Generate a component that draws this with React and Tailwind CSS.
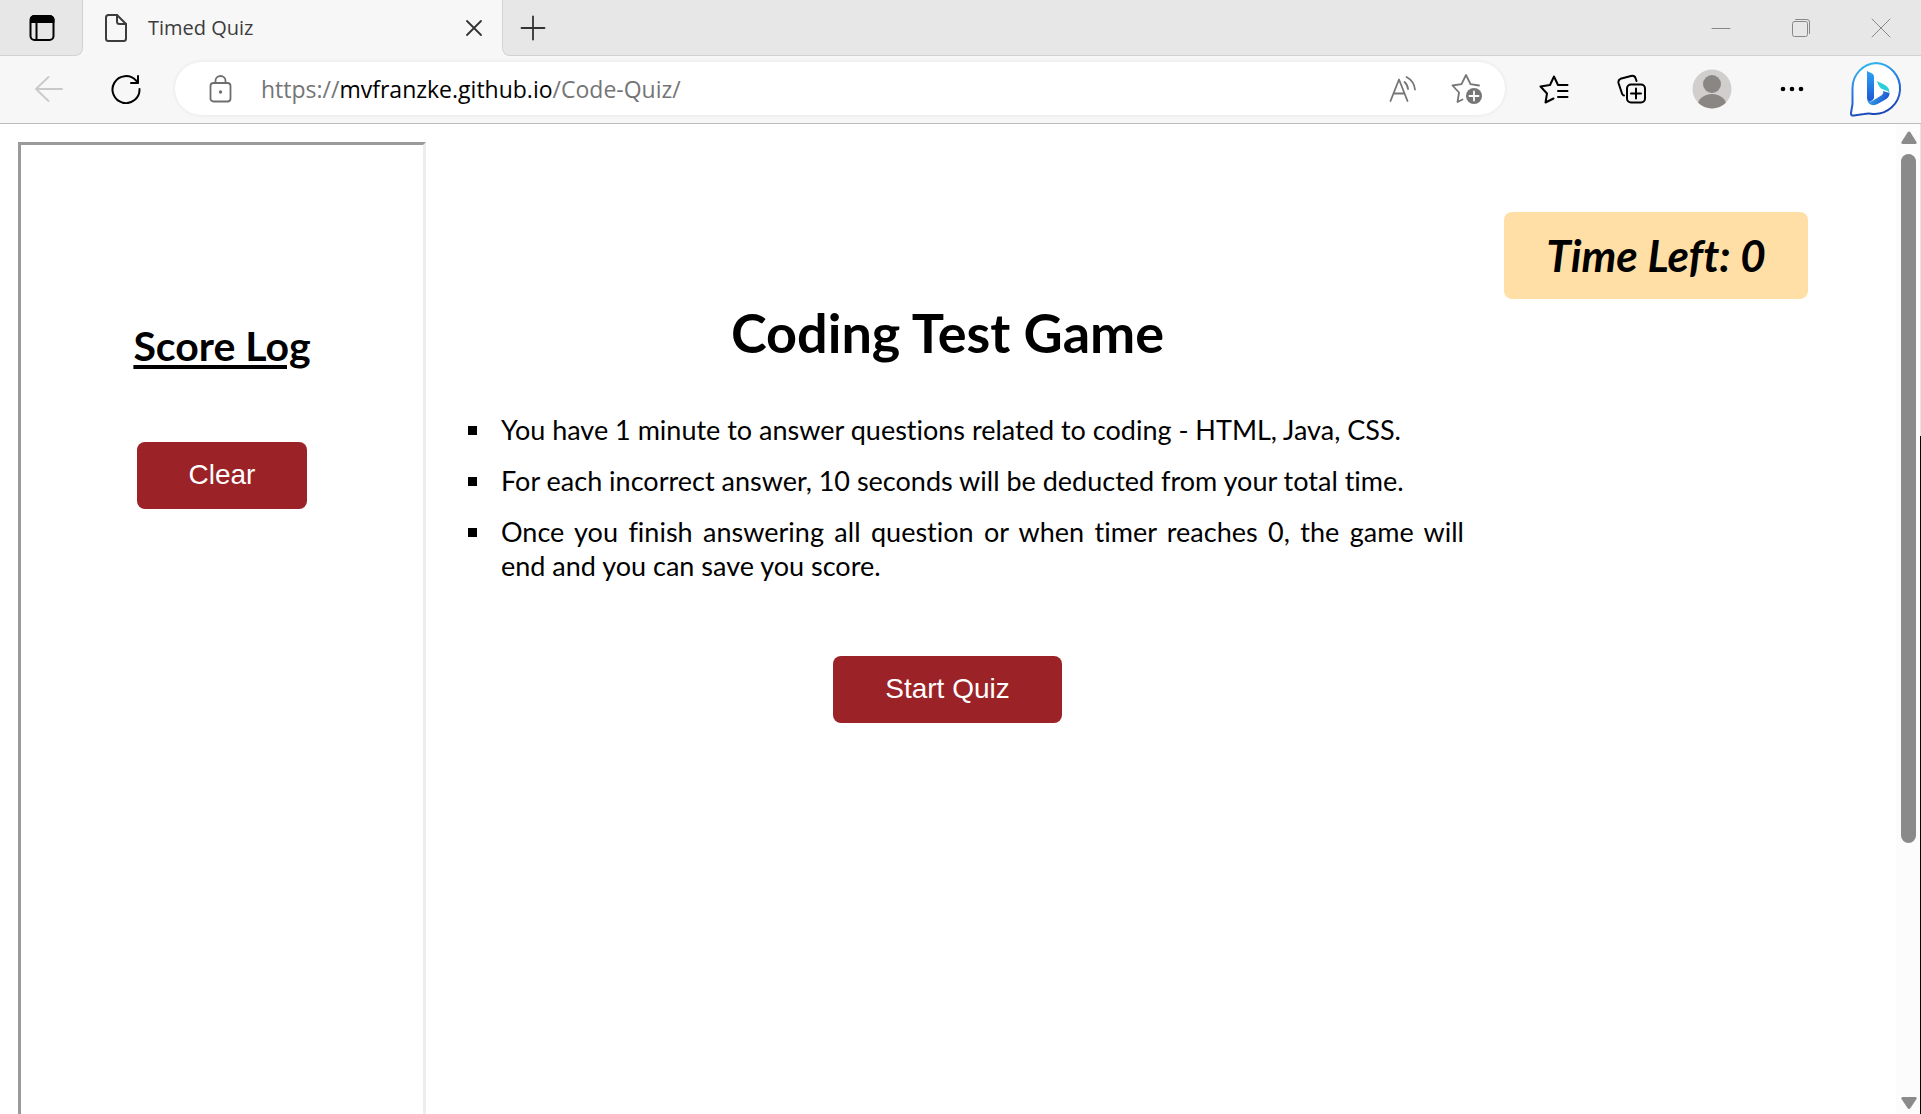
import React from "react";

const stroke = { fill: "none", strokeLinecap: "round", strokeLinejoin: "round" };

function IconButton({ label, className, children }) {
  return (
    <button type="button" aria-label={label} className={"flex shrink-0 items-center justify-center " + className}>
      {children}
    </button>
  );
}

function TabBar() {
  return (
    <header className="flex h-14 bg-[#f7f7f7] text-[#3c3c3c]">
      <div className="flex w-[83px] shrink-0 items-center justify-center rounded-br-lg border-b border-r border-[#d2d2d2] bg-[#e7e7e7] pl-0.5">
        <IconButton label="Tab actions" className="size-8">
          <svg width="26" height="28" viewBox="0 0 26 28" {...stroke} stroke="#000" strokeWidth="2">
            <rect x="1.500" y="2" width="23" height="24" rx="4" />
            <path d="M2 4.500Q3 2 6 2h14q3.500 0 4.500 3v3H2z" fill="#000" />
            <path d="M7.500 8v17" />
          </svg>
        </IconButton>
      </div>
      <div className="flex w-[419px] shrink-0 items-center rounded-t-lg pl-[21px] pr-4">
        <svg width="24" height="30" viewBox="0 0 24 30" {...stroke} stroke="#3c3c3c" strokeWidth="2">
          <path d="M4.500 2H13l9 9v14.500q0 2.500-2.500 2.500h-15Q2 28 2 25.500v-21Q2 2 4.500 2z" />
          <path d="M13 2v6.500Q13 11 15.500 11H22" />
        </svg>
        <span className="ml-5 grow font-['Open_Sans',sans-serif] text-xl">Timed Quiz</span>
        <IconButton label="Close tab" className="size-6">
          <svg width="18" height="18" viewBox="0 0 18 18" {...stroke} stroke="#333" strokeWidth="1.800">
            <path d="M2 2l14 14M16 2L2 16" />
          </svg>
        </IconButton>
      </div>
      <div className="flex grow items-center justify-between rounded-bl-lg border-b border-l border-[#d2d2d2] bg-[#e7e7e7] pl-4 pr-7">
        <IconButton label="New tab" className="size-7">
          <svg width="26" height="26" viewBox="0 0 26 26" {...stroke} stroke="#333" strokeWidth="1.800">
            <path d="M13 1.500v23M1.500 13h23" />
          </svg>
        </IconButton>
        <div className="flex items-center gap-14">
          <IconButton label="Minimize" className="size-6">
            <svg width="20" height="20" viewBox="0 0 20 20" {...stroke} stroke="#888">
              <path d="M1 10.500h18" />
            </svg>
          </IconButton>
          <IconButton label="Restore" className="size-6">
            <svg width="20" height="20" viewBox="0 0 20 20" {...stroke} stroke="#888">
              <rect x="1.500" y="3.500" width="15" height="15" rx="2" />
              <path d="M4.500 1.500H16q2.500 0 2.500 2.500v11.500" />
            </svg>
          </IconButton>
          <IconButton label="Close window" className="size-6">
            <svg width="20" height="20" viewBox="0 0 20 20" {...stroke} stroke="#888">
              <path d="M1 1l18 18M19 1L1 19" />
            </svg>
          </IconButton>
        </div>
      </div>
    </header>
  );
}

function AddressBar() {
  return (
    <nav className="flex h-[68px] items-center border-b border-[#bdbdbd] bg-[#f7f7f7] pb-0.5 pr-[17px]">
      <IconButton label="Back" className="ml-[33px] size-8">
        <svg width="28" height="26" viewBox="0 0 28 26" {...stroke} stroke="#c9c9c9" strokeWidth="1.800">
          <path d="M27 13H1M13.500 1L1 13l12.500 12" />
        </svg>
      </IconButton>
      <IconButton label="Refresh" className="ml-[45px] size-8">
        <svg width="30" height="30" viewBox="0 0 30 30" {...stroke} stroke="#000" strokeWidth="2">
          <path d="M28.500 15A13.500 13.500 0 1 1 25 6.500L27 9M27 2v7h-7" />
        </svg>
      </IconButton>
      <div className="ml-[33px] flex h-[53px] grow items-center rounded-full bg-white pl-[34px] pr-[22px] shadow-[0_0_4px_rgba(0,0,0,0.08)]">
        <svg width="23" height="28" viewBox="0 0 23 28" {...stroke} stroke="#6e6e6e" strokeWidth="1.800">
          <rect x="1.500" y="8" width="20" height="18.500" rx="3" />
          <path d="M6.500 8V5.500a5 4.500 0 0 1 10 0V8" />
          <circle cx="11.500" cy="17" r="1.700" fill="#6e6e6e" stroke="none" />
        </svg>
        <a href="https://mvfranzke.github.io/Code-Quiz/" className="ml-[29px] grow font-['Open_Sans',sans-serif] text-[23px] leading-8 text-[#757575]">
          https://<span className="text-black">mvfranzke.github.io</span>/Code-Quiz/
        </a>
        <IconButton label="Read aloud" className="size-8">
          <svg width="28" height="28" viewBox="0 0 28 28" {...stroke} stroke="#767676" strokeWidth="1.800">
            <path d="M1.500 26L10 4.500 18.500 26M4.500 18.500h11M15.500 7q3 2.500 3.500 7M17.500 2q7.500 4 8.500 12.500" />
          </svg>
        </IconButton>
        <IconButton label="Add to favorites" className="ml-8 size-8">
          <svg width="32" height="32" viewBox="0 0 32 32" {...stroke} stroke="#767676" strokeWidth="1.800">
            <path d="M28 12.500l-8.500-1.300L15 2l-4.500 9.200L1.500 12.500l6.500 7-1.500 9.500 5-2.500" />
            <circle cx="23" cy="23" r="8" fill="#767676" stroke="none" />
            <path d="M23 18.500v9M18.500 23h9" stroke="#fff" />
          </svg>
        </IconButton>
      </div>
      <IconButton label="Favorites" className="ml-[33px] size-8">
        <svg width="30" height="30" viewBox="0 0 30 30" {...stroke} stroke="#000" strokeWidth="2">
          <path d="M28.500 11H19l-4-8.500L11 11l-9.500 1.500 6.500 7L6.500 28.500l8-4M19 17h9.500M19 23h9.500" />
        </svg>
      </IconButton>
      <IconButton label="Collections" className="ml-[46px] size-8">
        <svg width="30" height="30" viewBox="0 0 30 30" {...stroke} stroke="#000" strokeWidth="2">
          <rect x="10" y="10.500" width="18" height="18" rx="4" />
          <path d="M19 14.500v10M14 19.500h10M7 21.500q-1.500-.3-2-2L1.500 9q-.6-3 2-4.200L14 2q3.500-.8 4.500 2l1 3" />
        </svg>
      </IconButton>
      <IconButton label="Profile" className="ml-11 size-10">
        <svg width="40" height="40" viewBox="0 0 40 40">
          <clipPath id="avatar"><circle cx="20" cy="20" r="19.500" /></clipPath>
          <g clipPath="url(#avatar)">
            <rect width="40" height="40" fill="#d1cfcd" />
            <circle cx="20" cy="15" r="9" fill="#8a8684" />
            <ellipse cx="20" cy="37" rx="14.500" ry="12" fill="#8a8684" />
          </g>
        </svg>
      </IconButton>
      <IconButton label="Settings and more" className="ml-11 size-8">
        <svg width="24" height="6" viewBox="0 0 24 6" fill="#000">
          <circle cx="3" cy="3" r="2.300" /><circle cx="12" cy="3" r="2.300" /><circle cx="21" cy="3" r="2.300" />
        </svg>
      </IconButton>
      <IconButton label="Bing" className="ml-10 size-14">
        <svg width="54" height="56" viewBox="0 0 54 56">
          <defs>
            <linearGradient id="ring" x1="0" y1="0" x2="0.300" y2="1">
              <stop offset="0" stopColor="#35c5f0" /><stop offset="0.500" stopColor="#2a7de0" /><stop offset="1" stopColor="#1b48b8" />
            </linearGradient>
            <linearGradient id="stem" x1="0" y1="0" x2="0" y2="1">
              <stop offset="0" stopColor="#2ba4f2" /><stop offset="1" stopColor="#1d55d6" />
            </linearGradient>
            <linearGradient id="bowl" x1="0" y1="0" x2="1" y2="0.300">
              <stop offset="0" stopColor="#38bdf0" /><stop offset="1" stopColor="#1f55cf" />
            </linearGradient>
          </defs>
          <path d="M27 2a25.500 25.500 0 1 1-3 51q-4-1-9 0l-10 1.500Q1.500 55 2 52l1.500-9V27A25 25 0 0 1 27 2z" fill="#fff" stroke="url(#ring)" strokeWidth="2" />
          <path d="M18 38q2 4 6 1.500l9-5.500q2-1.500 1-4l6.500 2q0 4-4 6.500l-8 4.500q-3.500 2-7 .5-3-1.500-3.500-5.500z" fill="url(#bowl)" />
          <path d="M28 20l8 4q4.500 2.500 4.500 8-1.500-2.500-5-3l-3.500-1.500q-3-2.500-4-7.500z" fill="#2bcfdc" />
          <path d="M18 10l5 2.500q2 1 2 3v21.500q-1 3-4 3.500-3-.5-3-4z" fill="url(#stem)" />
        </svg>
      </IconButton>
    </nav>
  );
}

function QuizButton({ children }) {
  return (
    <button type="button" className="rounded-lg bg-[#9b2226] px-[52px] pb-[18px] pt-4 font-['Liberation_Sans',sans-serif] text-[28px] leading-[33px] text-white">
      {children}
    </button>
  );
}

const rules = [
  "You have 1 minute to answer questions related to coding - HTML, Java, CSS.",
  "For each incorrect answer, 10 seconds will be deducted from your total time.",
  "Once you finish answering all question or when timer reaches 0, the game will end and you can save you score.",
];

function Page() {
  return (
    <div className="flex grow bg-white pl-[18px] font-['Lato',sans-serif] text-black [font-variant-ligatures:none]">
      <aside className="mt-[18px] flex w-[408px] shrink-0 flex-col items-center border-l-[3px] border-r-[3px] border-t-[3px] border-l-[#9a9a9a] border-r-[#ededed] border-t-[#9a9a9a] pt-[174px]">
        <h2 className="text-[41px] font-bold leading-[54px] underline decoration-4 underline-offset-4">Score Log</h2>
        <div className="mt-[69px]">
          <QuizButton>Clear</QuizButton>
        </div>
      </aside>
      <main className="ml-[5px] flex grow flex-col items-center pt-[175px]">
        <h1 className="text-[54px] font-bold leading-[68px]">Coding Test Game</h1>
        <ul className="mt-[46px] flex w-full list-[square] flex-col gap-[17px] pl-[62px] text-justify text-[27px] leading-[34px]">
          {rules.map((rule) => (
            <li key={rule} className="pl-2">{rule}</li>
          ))}
        </ul>
        <div className="mt-[73px]">
          <QuizButton>Start Quiz</QuizButton>
        </div>
      </main>
      <div className="ml-10 mr-[88px] mt-[88px] shrink-0">
        <p className="w-[304px] rounded-lg bg-[#ffdfa6] py-[17px] text-center text-[44px] font-bold italic leading-[53px]">Time Left: 0</p>
      </div>
      <div aria-hidden="true" className="flex w-6 shrink-0 flex-col items-center bg-[#fcfcfc] pb-[5px] pl-px pt-[7px]">
        <svg width="16" height="13" viewBox="0 0 16 13" fill="#8a8a8a"><path d="M6.500 1.500q1.500-2 3 0l6 9.500q.8 2-1.500 2H2Q-.3 13 .5 11z" /></svg>
        <div className="mt-2.5 flex w-[15px] grow flex-col">
          <div className="grow-[688] basis-0 rounded-full bg-[#8a8a8a]" />
          <div className="grow-[254] basis-0" />
        </div>
        <svg width="16" height="12" viewBox="0 0 16 12" fill="#8a8a8a"><path d="M6.500 11q1.500 2 3 0l6-9Q16.300 0 14 0H2Q-.3 0 .5 2z" /></svg>
      </div>
      <div aria-hidden="true" className="flex w-px shrink-0 flex-col">
        <div className="grow-[312] basis-0 bg-[#e4e4e4]" />
        <div className="grow-[678] basis-0 bg-black" />
      </div>
    </div>
  );
}

export default function App() {
  return (
    <div className="flex min-h-screen flex-col">
      <TabBar />
      <AddressBar />
      <Page />
    </div>
  );
}
